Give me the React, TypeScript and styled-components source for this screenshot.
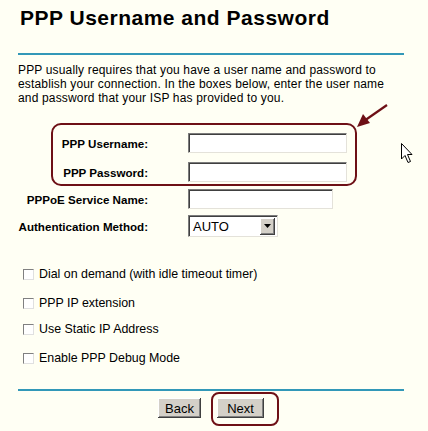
import { createGlobalStyle } from "styled-components";
import styled from "styled-components";

const GlobalStyle = createGlobalStyle`
    html, body {
        margin: 0;
        padding: 0;
        background: #fffff4;
    }
    body {
        font-family: "Liberation Sans", Arial, sans-serif;
        color: #000;
    }
`

const maroon = "#6e1016";
const teal = "#3298b8";

const Page = styled.div`
    position: relative;
    width: 428px;
    height: 431px;
    padding-left: 18px;
    box-sizing: border-box;
    overflow: hidden;
`

const Title = styled.h1`
    margin: 6px 0 0 2px;
    font-size: 21px;
    letter-spacing: 0.5px;
    line-height: 24px;
    font-weight: bold;
`

const Rule = styled.div<{ $top: number }>`
    width: 386px;
    height: 2px;
    margin-top: ${props => props.$top}px;
    background: ${teal};
`

const Intro = styled.p`
    margin: 8px 0 0 0;
    width: 400px;
    font-size: 12px;
    letter-spacing: 0.16px;
    line-height: 14px;
    white-space: nowrap;
`

const Highlight = styled.div`
    width: 306px;
    margin: 18px 0 0 33px;
    padding: 8px 0 2px 0;
    border: 2px solid ${maroon};
    border-radius: 10px;
    box-sizing: border-box;
`

const Row = styled.div<{ $labelWidth: number; $top: number }>`
    display: grid;
    grid-template-columns: ${props => props.$labelWidth}px auto;
    column-gap: 40px;
    align-items: center;
    margin-top: ${props => props.$top}px;
`

const Label = styled.label`
    text-align: right;
    font-size: 11.6px;
    font-weight: bold;
    white-space: nowrap;
`

const TextBox = styled.div<{ $width: number }>`
    width: ${props => props.$width}px;
    height: 20px;
    box-sizing: border-box;
    background: #fff;
    border-top: 1px solid #7c7c7c;
    border-left: 1px solid #7c7c7c;
    border-bottom: 1px solid #e4e2da;
    border-right: 1px solid #e4e2da;
    box-shadow: inset 1px 1px 0 #404040;
`

const Select = styled.div`
    display: flex;
    align-items: center;
    justify-content: space-between;
    width: 90px;
    height: 22px;
    box-sizing: border-box;
    padding: 0 2px 0 4px;
    background: #fff;
    border-top: 1px solid #7c7c7c;
    border-left: 1px solid #7c7c7c;
    border-bottom: 1px solid #e4e2da;
    border-right: 1px solid #e4e2da;
    box-shadow: inset 1px 1px 0 #404040;
    font-size: 13px;
`

const DropButton = styled.span`
    display: flex;
    align-items: center;
    justify-content: center;
    width: 15px;
    height: 17px;
    background: #d4d0c8;
    box-shadow: inset -1px -1px 0 #404040, inset 1px 1px 0 #fff, inset -2px -2px 0 #808080;
`

const Options = styled.div`
    margin-top: 29px;
`

const Option = styled.div<{ $top: number }>`
    display: flex;
    align-items: center;
    height: 16px;
    margin-top: ${props => props.$top}px;
    padding-left: 5px;
    font-size: 12.4px;
`

const Check = styled.span`
    width: 11px;
    height: 11px;
    margin-right: 5px;
    box-sizing: border-box;
    background: #fff;
    border-top: 1px solid #808080;
    border-left: 1px solid #808080;
    border-bottom: 1px solid #e0e0e0;
    border-right: 1px solid #e0e0e0;
`

const Buttons = styled.div`
    display: flex;
    justify-content: center;
    gap: 16px;
    width: 386px;
    margin-top: 7px;
`

const Button = styled.button<{ $width: number }>`
    position: relative;
    width: ${props => props.$width}px;
    height: 20px;
    padding: 0;
    border: none;
    background: #d4d0c8;
    font-family: "Liberation Sans", Arial, sans-serif;
    font-size: 13px;
    color: #000;
    box-shadow: inset -1px -1px 0 #404040, inset 1px 1px 0 #fff, inset -2px -2px 0 #808080;
`

const Ring = styled.span`
    position: absolute;
    left: -6px;
    top: -6px;
    right: -15px;
    bottom: -8px;
    border: 2px solid ${maroon};
    border-radius: 8px;
`

const Overlay = styled.svg`
    position: absolute;
    left: 0;
    top: 0;
`

const options = [
    { text: "Dial on demand (with idle timeout timer)", top: 0 },
    { text: "PPP IP extension", top: 13 },
    { text: "Use Static IP Address", top: 10 },
    { text: "Enable PPP Debug Mode", top: 13 },
];

function App() {
    return (
        <Page>
            <GlobalStyle />
            <Title>PPP Username and Password</Title>
            <Rule $top={23} />
            <Intro>
                PPP usually requires that you have a user name and password to<br />
                establish your connection. In the boxes below, enter the user name<br />
                and password that your ISP has provided to you.
            </Intro>
            <Highlight>
                <Row $labelWidth={95} $top={0}>
                    <Label>PPP Username:</Label>
                    <TextBox $width={159} />
                </Row>
                <Row $labelWidth={95} $top={9}>
                    <Label>PPP Password:</Label>
                    <TextBox $width={159} />
                </Row>
            </Highlight>
            <Row $labelWidth={130} $top={3}>
                <Label>PPPoE Service Name:</Label>
                <TextBox $width={145} />
            </Row>
            <Row $labelWidth={130} $top={6}>
                <Label>Authentication Method:</Label>
                <Select>
                    AUTO
                    <DropButton>
                        <svg width="7" height="4" viewBox="0 0 7 4">
                            <path d="M0 0h7L3.5 4z" fill="#000" />
                        </svg>
                    </DropButton>
                </Select>
            </Row>
            <Options>
                {options.map(opt => (
                    <Option key={opt.text} $top={opt.top}>
                        <Check />
                        {opt.text}
                    </Option>
                ))}
            </Options>
            <Rule $top={23} />
            <Buttons>
                <Button $width={43}>Back</Button>
                <Button $width={47}>
                    Next
                    <Ring />
                </Button>
            </Buttons>
            <Overlay width="428" height="431" viewBox="0 0 428 431">
                <line x1="387" y1="105" x2="364" y2="121" stroke={maroon} strokeWidth="2.2" />
                <path d="M357 127 L363 114 L370 123 Z" fill={maroon} />
                <path
                    d="M401.5 143.5 L401.5 159 L405 155.5 L408 162.5 L410.5 161.5 L407.5 154.5 L412 154.5 Z"
                    fill="#fff"
                    stroke="#000"
                    strokeWidth="1"
                    strokeLinejoin="miter"
                />
            </Overlay>
        </Page>
    )
}

export default App;
